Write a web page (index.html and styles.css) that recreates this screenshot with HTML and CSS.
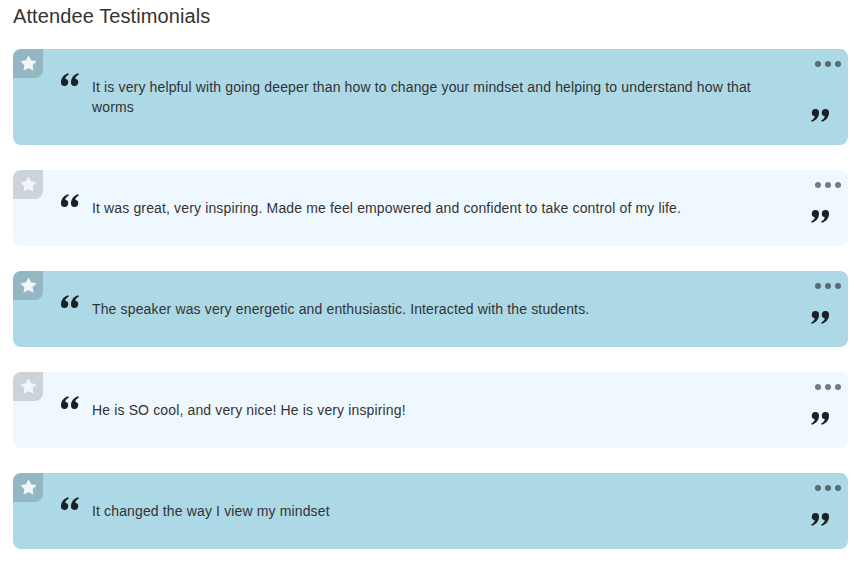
FILE: index.html
```html
<!DOCTYPE html>
<html lang="en">
<head>
    <meta charset="UTF-8">
    <title>Attendee Testimonials</title>
    <link rel="stylesheet" href="styles.css">
</head>
<body>
<h2 class="title">Attendee Testimonials</h2>
<div class="list">
    <div class="card blue">
        <span class="tab"><svg viewBox="0 0 24 24"><path d="M12 2l3.09 6.26L22 9.27l-5 4.87 1.18 6.88L12 17.77l-6.18 3.25L7 14.14 2 9.27l6.91-1.01z"/></svg></span>
        <span class="dots"><i></i><i></i><i></i></span>
        <svg class="quote open" viewBox="0 0 20 13"><path d="M1 9.2C1 5 3.6 1.6 8.2 0.2L8.9 1.5C6.6 2.6 5.4 4.2 5.3 5.8A3.6 3.6 0 1 1 1 9.2Z"/><path d="M11 9.2C11 5 13.6 1.6 18.2 0.2L18.9 1.5C16.6 2.6 15.4 4.2 15.3 5.8A3.6 3.6 0 1 1 11 9.2Z"/></svg>
        <p class="text">It is very helpful with going deeper than how to change your mindset and helping to understand how that worms</p>
        <svg class="quote close" viewBox="0 0 20 13"><path d="M1 9.2C1 5 3.6 1.6 8.2 0.2L8.9 1.5C6.6 2.6 5.4 4.2 5.3 5.8A3.6 3.6 0 1 1 1 9.2Z"/><path d="M11 9.2C11 5 13.6 1.6 18.2 0.2L18.9 1.5C16.6 2.6 15.4 4.2 15.3 5.8A3.6 3.6 0 1 1 11 9.2Z"/></svg>
    </div>
    <div class="card light">
        <span class="tab"><svg viewBox="0 0 24 24"><path d="M12 2l3.09 6.26L22 9.27l-5 4.87 1.18 6.88L12 17.77l-6.18 3.25L7 14.14 2 9.27l6.91-1.01z"/></svg></span>
        <span class="dots"><i></i><i></i><i></i></span>
        <svg class="quote open" viewBox="0 0 20 13"><path d="M1 9.2C1 5 3.6 1.6 8.2 0.2L8.9 1.5C6.6 2.6 5.4 4.2 5.3 5.8A3.6 3.6 0 1 1 1 9.2Z"/><path d="M11 9.2C11 5 13.6 1.6 18.2 0.2L18.9 1.5C16.6 2.6 15.4 4.2 15.3 5.8A3.6 3.6 0 1 1 11 9.2Z"/></svg>
        <p class="text">It was great, very inspiring. Made me feel empowered and confident to take control of my life.</p>
        <svg class="quote close" viewBox="0 0 20 13"><path d="M1 9.2C1 5 3.6 1.6 8.2 0.2L8.9 1.5C6.6 2.6 5.4 4.2 5.3 5.8A3.6 3.6 0 1 1 1 9.2Z"/><path d="M11 9.2C11 5 13.6 1.6 18.2 0.2L18.9 1.5C16.6 2.6 15.4 4.2 15.3 5.8A3.6 3.6 0 1 1 11 9.2Z"/></svg>
    </div>
    <div class="card blue">
        <span class="tab"><svg viewBox="0 0 24 24"><path d="M12 2l3.09 6.26L22 9.27l-5 4.87 1.18 6.88L12 17.77l-6.18 3.25L7 14.14 2 9.27l6.91-1.01z"/></svg></span>
        <span class="dots"><i></i><i></i><i></i></span>
        <svg class="quote open" viewBox="0 0 20 13"><path d="M1 9.2C1 5 3.6 1.6 8.2 0.2L8.9 1.5C6.6 2.6 5.4 4.2 5.3 5.8A3.6 3.6 0 1 1 1 9.2Z"/><path d="M11 9.2C11 5 13.6 1.6 18.2 0.2L18.9 1.5C16.6 2.6 15.4 4.2 15.3 5.8A3.6 3.6 0 1 1 11 9.2Z"/></svg>
        <p class="text">The speaker was very energetic and enthusiastic. Interacted with the students.</p>
        <svg class="quote close" viewBox="0 0 20 13"><path d="M1 9.2C1 5 3.6 1.6 8.2 0.2L8.9 1.5C6.6 2.6 5.4 4.2 5.3 5.8A3.6 3.6 0 1 1 1 9.2Z"/><path d="M11 9.2C11 5 13.6 1.6 18.2 0.2L18.9 1.5C16.6 2.6 15.4 4.2 15.3 5.8A3.6 3.6 0 1 1 11 9.2Z"/></svg>
    </div>
    <div class="card light">
        <span class="tab"><svg viewBox="0 0 24 24"><path d="M12 2l3.09 6.26L22 9.27l-5 4.87 1.18 6.88L12 17.77l-6.18 3.25L7 14.14 2 9.27l6.91-1.01z"/></svg></span>
        <span class="dots"><i></i><i></i><i></i></span>
        <svg class="quote open" viewBox="0 0 20 13"><path d="M1 9.2C1 5 3.6 1.6 8.2 0.2L8.9 1.5C6.6 2.6 5.4 4.2 5.3 5.8A3.6 3.6 0 1 1 1 9.2Z"/><path d="M11 9.2C11 5 13.6 1.6 18.2 0.2L18.9 1.5C16.6 2.6 15.4 4.2 15.3 5.8A3.6 3.6 0 1 1 11 9.2Z"/></svg>
        <p class="text">He is SO cool, and very nice! He is very inspiring!</p>
        <svg class="quote close" viewBox="0 0 20 13"><path d="M1 9.2C1 5 3.6 1.6 8.2 0.2L8.9 1.5C6.6 2.6 5.4 4.2 5.3 5.8A3.6 3.6 0 1 1 1 9.2Z"/><path d="M11 9.2C11 5 13.6 1.6 18.2 0.2L18.9 1.5C16.6 2.6 15.4 4.2 15.3 5.8A3.6 3.6 0 1 1 11 9.2Z"/></svg>
    </div>
    <div class="card blue">
        <span class="tab"><svg viewBox="0 0 24 24"><path d="M12 2l3.09 6.26L22 9.27l-5 4.87 1.18 6.88L12 17.77l-6.18 3.25L7 14.14 2 9.27l6.91-1.01z"/></svg></span>
        <span class="dots"><i></i><i></i><i></i></span>
        <svg class="quote open" viewBox="0 0 20 13"><path d="M1 9.2C1 5 3.6 1.6 8.2 0.2L8.9 1.5C6.6 2.6 5.4 4.2 5.3 5.8A3.6 3.6 0 1 1 1 9.2Z"/><path d="M11 9.2C11 5 13.6 1.6 18.2 0.2L18.9 1.5C16.6 2.6 15.4 4.2 15.3 5.8A3.6 3.6 0 1 1 11 9.2Z"/></svg>
        <p class="text">It changed the way I view my mindset</p>
        <svg class="quote close" viewBox="0 0 20 13"><path d="M1 9.2C1 5 3.6 1.6 8.2 0.2L8.9 1.5C6.6 2.6 5.4 4.2 5.3 5.8A3.6 3.6 0 1 1 1 9.2Z"/><path d="M11 9.2C11 5 13.6 1.6 18.2 0.2L18.9 1.5C16.6 2.6 15.4 4.2 15.3 5.8A3.6 3.6 0 1 1 11 9.2Z"/></svg>
    </div>
</div>
</body>
</html>
```

FILE: styles.css
```css
* {
    margin: 0;
    padding: 0;
    box-sizing: border-box;
}

body {
    background: #fff;
    padding: 0 10px 0 13px;
    font-family: "Liberation Sans", Arial, sans-serif;
    color: #333;
}

.title {
    font-size: 20px;
    font-weight: normal;
    line-height: 23px;
    margin-top: 5px;
    margin-bottom: 21px;
    color: #333;
    letter-spacing: 0.1px;
}

.list {
    display: flex;
    flex-direction: column;
    gap: 25px;
}

.card {
    position: relative;
    display: flex;
    align-items: flex-start;
    border-radius: 8px;
    padding: 28px 18px 28px 47px;
}

.card.blue {
    background: #add8e6;
}

.card.light {
    background: #f0f8ff;
}

.tab {
    position: absolute;
    left: 0;
    top: 0;
    width: 30px;
    height: 29px;
    border-radius: 8px 0 8px 0;
    background: rgba(0, 0, 0, .15);
    display: flex;
    justify-content: center;
    align-items: center;
}

.tab svg {
    width: 17px;
    height: 17px;
    fill: #f2f6f9;
    stroke: #f2f6f9;
    stroke-width: 1.5;
    stroke-linejoin: round;
}

.dots {
    position: absolute;
    top: 12px;
    right: 7px;
    display: flex;
    gap: 4px;
}

.dots i {
    width: 6px;
    height: 6px;
    border-radius: 50%;
    background: rgba(0, 0, 0, .5);
}

.quote {
    flex: none;
    width: 20px;
    height: 13px;
    fill: #1c2024;
}

.quote.open {
    margin-top: -4px;
    margin-right: 12px;
}

.quote.close {
    align-self: flex-end;
    transform: rotate(180deg);
    margin-left: 15px;
    margin-bottom: -5px;
}

.text {
    flex: 1;
    font-size: 14px;
    line-height: 20px;
    letter-spacing: 0.14px;
    color: #333;
}
```
